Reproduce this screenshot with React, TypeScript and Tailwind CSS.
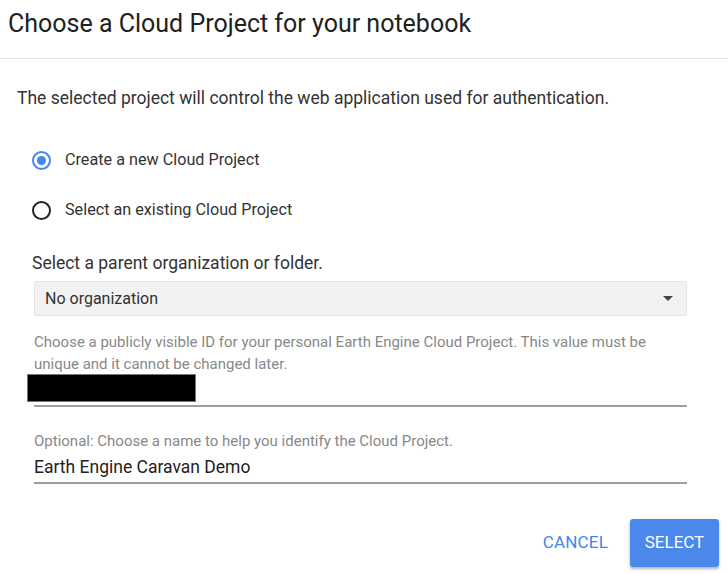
import React, { useState } from 'react';

const Radio = ({ checked, label, onClick }: { checked: boolean; label: string; onClick: () => void }) => (
  <div className="flex items-center h-[24px] cursor-pointer" onClick={onClick}>
    <div
      className={`w-[19px] h-[19px] rounded-full border-2 flex items-center justify-center ${checked ? 'border-[#4285f4]' : 'border-[#222]'}`}
    >
      {checked && <div className="w-[9px] h-[9px] rounded-full bg-[#4285f4]" />}
    </div>
    <span className="ml-[14px] text-[16.2px] text-[#333]">{label}</span>
  </div>
);

const App = () => {
  const [mode, setMode] = useState(0);
  const [name, setName] = useState('Earth Engine Caravan Demo');

  return (
    <div className="w-[728px] h-[574px] bg-white font-['Roboto',sans-serif] text-[#212121] overflow-hidden">
      <div className="h-[59px] border-b border-[#e0e0e0] pl-[8px] pt-[8px]">
        <h1 className="text-[25px] leading-[32px] font-normal">Choose a Cloud Project for your notebook</h1>
      </div>

      <p className="pl-[17px] pt-[27px] text-[17.5px] leading-[24px] text-[#333]">
        The selected project will control the web application used for authentication.
      </p>

      <div className="pl-[32px] pt-[38px] flex flex-col gap-[26px]">
        <Radio checked={mode === 0} label="Create a new Cloud Project" onClick={() => setMode(0)} />
        <Radio checked={mode === 1} label="Select an existing Cloud Project" onClick={() => setMode(1)} />
      </div>

      <div className="pl-[32px] pr-[41px] pt-[29px]">
        <div className="text-[17.5px] leading-[24px] text-[#333]">Select a parent organization or folder.</div>
        <div className="ml-[2px] mt-[6px] h-[35px] bg-[#f2f2f2] border border-[#e4e4e4] rounded-[2px] flex items-center justify-between pl-[10px] pr-[13px]">
          <span className="text-[16px] text-[#333]">No organization</span>
          <svg width="10" height="5" viewBox="0 0 10 5">
            <path d="M0 0 L10 0 L5 5 Z" fill="#444" />
          </svg>
        </div>

        <div className="ml-[2px] mt-[15px] max-w-[620px] text-[15px] leading-[22px] text-[#888]">
          Choose a publicly visible ID for your personal Earth Engine Cloud Project. This value must be unique and it cannot be changed later.
        </div>
        <div className="ml-[2px] border-b-2 border-[#9e9e9e] h-[33px]">
          <div className="-ml-[7px] -mt-[1px] w-[169px] h-[28px] bg-black border border-[#777]" />
        </div>

        <div className="ml-[2px] mt-[23px] text-[15px] leading-[22px] text-[#888]">
          Optional: Choose a name to help you identify the Cloud Project.
        </div>
        <input
          value={name}
          onChange={(e) => setName(e.target.value)}
          className="ml-[2px] w-[653px] h-[32px] text-[17.5px] text-[#222] border-b-2 border-[#9e9e9e] outline-none bg-transparent"
        />
      </div>

      <div className="flex justify-end items-center pr-[9px] pt-[35px]">
        <button className="text-[17px] text-[#4285f4] mr-[22px] tracking-[0.2px]">CANCEL</button>
        <button className="w-[89px] h-[48px] bg-[#4a88ec] text-white text-[17px] rounded-[3px] shadow-[0_2px_3px_rgba(0,0,0,0.3)]">
          SELECT
        </button>
      </div>
    </div>
  );
};

export default App;
